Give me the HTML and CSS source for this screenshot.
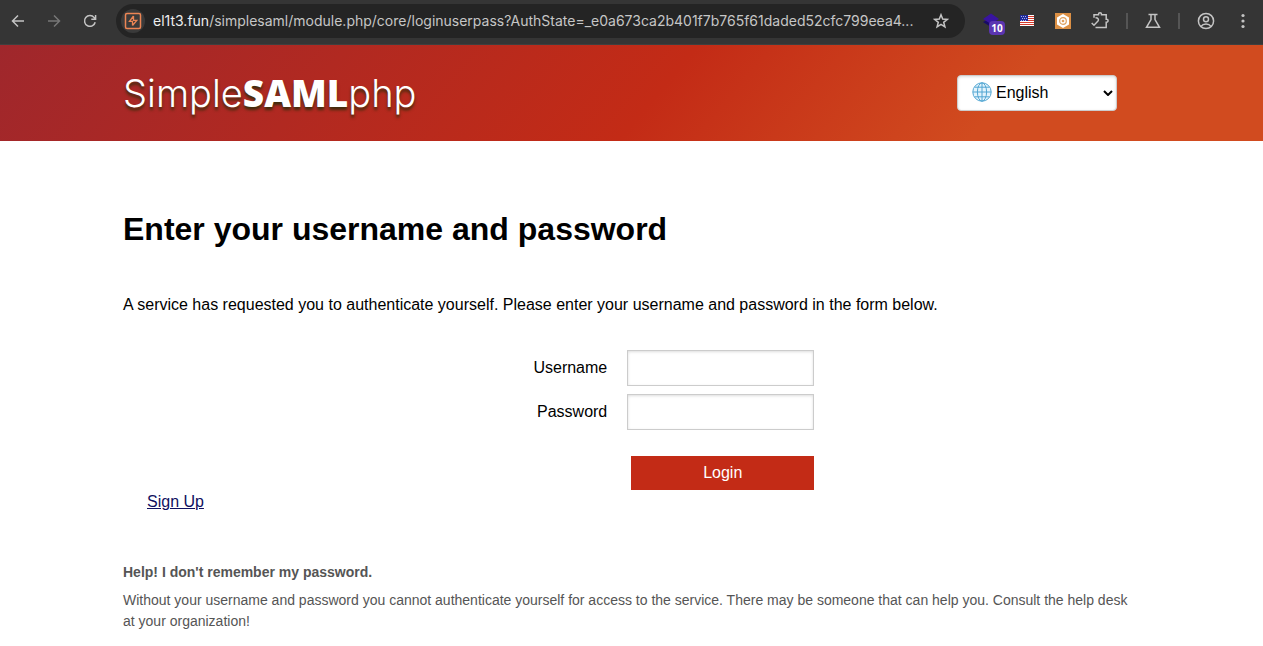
FILE: index.html
```html
<!DOCTYPE html>
<html lang="en">
<head>
<meta charset="utf-8">
<meta name="viewport" content="width=device-width, initial-scale=1">
<title>Enter your username and password</title>
<link rel="stylesheet" href="styles.css">
</head>
<body>
<div class="toolbar">
  <div class="nav">
    <button class="tool" aria-label="Back"><svg viewBox="0 0 16 16"><path d="M14 8H3M8 2.500 2.500 8 8 13.500"/></svg></button>
    <button class="tool dim" aria-label="Forward"><svg viewBox="0 0 16 16"><path d="M2 8h11M8 2.500 13.500 8 8 13.500"/></svg></button>
    <button class="tool" aria-label="Reload"><svg viewBox="0 0 16 16"><path d="M13.200 9.200A5.400 5.400 0 1 1 12.200 4.600L13.300 6M13.600 2v4.300H9.300"/></svg></button>
  </div>
  <div class="address">
    <span class="site"><svg viewBox="0 0 18 18"><rect x="1.500" y="1.500" width="15" height="15" rx="1.500"/><path stroke-width="1.300" d="M9.500 4 5.500 9.300h3v4.200M9.500 4v4.300h3.300L8.500 13.500"/></svg></span>
    <span class="url"><b>el1t3.fun</b>/simplesaml/module.php/core/loginuserpass?AuthState=_e0a673ca2b401f7b765f61daded52cfc799eea4...</span>
    <button class="tool" aria-label="Bookmark"><svg viewBox="0 0 16 16"><path d="m8 1.800 1.700 4.300 4.600.3-3.600 2.900 1.200 4.500L8 11.300l-3.900 2.500 1.200-4.500-3.600-2.900 4.600-.3z"/></svg></button>
  </div>
  <div class="extensions">
    <button class="tool stack" aria-label="Layers extension, 10 items"><svg viewBox="0 0 16 16"><path fill="#180a68" stroke="none" d="M0 9l8-4 8 4-8 5z"/><path fill="#3914a0" stroke="none" d="M0 6 8 .500 16 6l-8 5z"/></svg><span class="badge">10</span></button>
    <button class="tool" aria-label="United States"><svg viewBox="0 0 16 16"><g stroke="none"><path fill="#fff" d="M1 2h14v11H1z"/><path fill="#d33a2c" d="M8 3h7v1H8zM8 5h7v1H8zM8 7h7v1H8zM1 9h14v1H1zM1 11h14v1H1z"/><path fill="#202a9a" d="M1 2h8v6H1z"/><path fill="#aab4ec" d="M2 3h1v1H2zM4 3h1v1H4zM6 3h1v1H6zM3 5h1v1H3zM5 5h1v1H5zM7 5h1v1H7zM2 7h1v1H2zM4 7h1v1H4zM6 7h1v1H6z"/></g></svg></button>
    <button class="tool" aria-label="Hexagon extension"><svg viewBox="0 0 16 16"><path fill="#dc9045" stroke="none" d="M0 0h16v16H0z"/><path fill="#fff" stroke="none" d="m8 1 6 3.500v7L8 15l-6-3.500v-7z"/><circle cx="8" cy="8" r="3.300" stroke="#dfa05e" stroke-width="1.200"/><circle cx="8" cy="8" r="1.300" fill="#dfa05e" stroke="none"/></svg></button>
    <button class="tool wide" aria-label="Extensions"><svg viewBox="0 0 18 18"><path d="M3 5.800V2.700h4.500V2.300a1.500 1.500 0 0 1 3 0v.4h4.700v4.500h.4a1.500 1.500 0 0 1 0 3h-.4v5.300H4.500M.7 11l2.300 2.200 4-4.200M4.500 5.800c2.800 0 3.500 1.800 2.500 3.200"/></svg></button>
    <span class="rule"></span>
    <button class="tool" aria-label="Labs"><svg viewBox="0 0 16 16"><path d="M3.500 1.500h9M6 1.500v5L1.500 14.300h13L10 6.500v-5"/></svg></button>
    <span class="rule"></span>
    <button class="tool wide" aria-label="Profile"><svg viewBox="0 0 18 18"><circle cx="9" cy="9" r="7.600"/><circle cx="9" cy="7.200" r="2.500"/><path d="M4 14.300c2.200-3.200 7.800-3.200 10 0"/></svg></button>
    <button class="tool" aria-label="Menu"><svg viewBox="0 0 16 16"><g fill="#c4c4c4" stroke="none"><circle cx="8" cy="2.500" r="1.600"/><circle cx="8" cy="8" r="1.600"/><circle cx="8" cy="13.500" r="1.600"/></g></svg></button>
  </div>
</div>

<header class="header">
  <div class="logo">Simple<strong>SAML</strong>php</div>
  <div class="language">
    <svg class="globe" viewBox="0 0 20 20" aria-hidden="true"><circle cx="10" cy="10" r="9.200"/><ellipse cx="10" cy="10" rx="4.600" ry="9.200"/><path d="M10 1v18M1 10h18M2.800 5.200h14.400M2.800 14.800h14.400"/></svg>
    <select aria-label="Language"><option>English</option></select>
    <svg class="chevron" viewBox="0 0 10 6" aria-hidden="true"><path d="m1 1 4 4 4-4"/></svg>
  </div>
</header>

<main class="content">
  <h1>Enter your username and password</h1>
  <p class="intro">A service has requested you to authenticate yourself. Please enter your username and password in the form below.</p>
  <form class="login">
    <label for="username">Username</label>
    <input id="username" type="text">
    <label for="password">Password</label>
    <input id="password" type="password">
    <button class="submit" type="submit">Login</button>
  </form>
  <a class="signup" href="#">Sign Up</a>
  <section class="help">
    <h2>Help! I don't remember my password.</h2>
    <p>Without your username and password you cannot authenticate yourself for access to the service. There may be someone that can help you. Consult the help desk at your organization!</p>
  </section>
</main>
</body>
</html>
```
FILE: styles.css
```css
* { box-sizing: border-box; }
body {
  margin: 0;
  background: #fff;
  color: #000;
  font: 16px/24px "Liberation Sans", Arial, sans-serif;
}
h1, h2, p { margin: 0; }
button, input, select { font: inherit; }

.toolbar {
  display: flex;
  align-items: center;
  gap: 18px;
  height: 45px;
  padding: 0 12px 3px 10px;
  background: #353535;
  border-bottom: 1px solid #3f3f3f;
}
.nav { display: flex; gap: 20px; }
.tool {
  display: block;
  flex: none;
  width: 16px;
  height: 16px;
  padding: 0;
  border: 0;
  background: none;
}
.tool svg, .site svg {
  display: block;
  width: 100%;
  height: 100%;
  fill: none;
  stroke: #c4c4c4;
  stroke-width: 1.5;
}
.dim svg { stroke: #777; }
.address {
  display: flex;
  align-items: center;
  flex: 1;
  min-width: 0;
  height: 34px;
  padding: 0 16px 0 5px;
  border-radius: 17px;
  background: #242424;
}
.site {
  flex: none;
  width: 24px;
  height: 24px;
  padding: 3px;
  border-radius: 50%;
  background: #3a3a3a;
}
.site svg { stroke: #ec8554; }
.url {
  flex: 1;
  min-width: 0;
  margin: 0 16px 0 8px;
  overflow: hidden;
  color: #c6c6c6;
  font: 14px/20px Inter, Roboto, sans-serif;
  white-space: nowrap;
}
.url b { color: #eee; font-weight: 400; }
.extensions { display: flex; align-items: center; gap: 20px; }
.extensions .wide { width: 18px; height: 18px; }
.rule { width: 2px; height: 16px; margin: 0 -3px; background: #555; }
.stack { position: relative; }
.badge {
  position: absolute;
  left: 6px;
  top: 8px;
  width: 16px;
  height: 14px;
  border-radius: 4px;
  background: #5b35b1;
  color: #fff;
  font: 700 10px/14px "Open Sans", sans-serif;
  text-align: center;
}

.header {
  display: flex;
  align-items: center;
  justify-content: space-between;
  height: 96px;
  padding: 0 146px 0 123px;
  background: linear-gradient(130deg, #9f272c 0%, #c32b16 52%, #d14b1f 78%);
}
.logo {
  color: #fff;
  font: 300 38px/48px Inter, sans-serif;
  text-shadow: 0 3px 3px #3f2c0c;
}
.logo strong { font: 800 37px/48px "Open Sans", sans-serif; }
.language { position: relative; width: 160px; }
.language select {
  display: block;
  width: 100%;
  height: 36px;
  padding: 0 24px 1px 38px;
  border: 1px solid #ccc;
  border-radius: 4px;
  background: #fff;
  box-shadow: inset 0 1px 3px #ddd;
  color: #000;
  appearance: none;
}
.globe {
  position: absolute;
  left: 15px;
  top: 7px;
  width: 20px;
  height: 20px;
  fill: #e2f3fc;
  stroke: #52a6d2;
}
.globe ellipse { fill: none; }
.chevron {
  position: absolute;
  right: 4px;
  top: 15px;
  width: 10px;
  height: 6px;
  fill: none;
  stroke: #000;
  stroke-width: 2;
}

.content { padding: 68px 123px 0; }
h1 { font-size: 32px; line-height: 40px; }
.intro { margin-top: 44px; }
.login {
  display: grid;
  grid-template-columns: 17fr 18fr;
  align-items: center;
  gap: 8px 20px;
  margin-top: 33px;
}
.login label { text-align: right; }
.login input {
  width: 187px;
  height: 36px;
  padding: 0 8px;
  border: 1px solid #ccc;
  border-radius: 0;
  background: #fff;
  box-shadow: inset 0 1px 3px #ddd;
}
.submit {
  grid-column: 2;
  width: 183px;
  height: 34px;
  margin: 18px 0 0 4px;
  padding: 0;
  border: 0;
  background: #c32b16;
  color: #fff;
}
.signup {
  display: inline-block;
  margin-left: 24px;
  color: #0f0f60;
}
.help {
  margin-top: 48px;
  color: #555;
  font-size: 14px;
  line-height: 21px;
}
.help h2 { margin-bottom: 7px; font-size: 14px; line-height: 21px; }
```
